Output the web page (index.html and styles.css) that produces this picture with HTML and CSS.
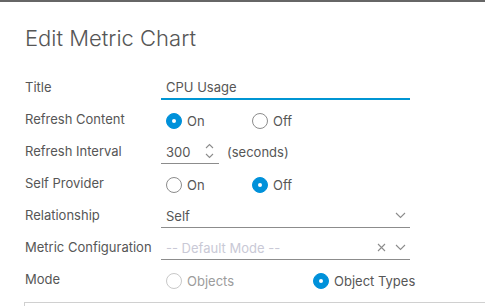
FILE: index.html
```html
<!DOCTYPE html>
<html>
<head>
<meta charset="utf-8">
<link rel="stylesheet" href="styles.css">
</head>
<body>
<div class="modal">
  <h1 class="heading">Edit Metric Chart</h1>
  <div class="form">
    <div class="row">
      <div class="label">Title</div>
      <div class="control">
        <div class="input input-active">CPU Usage</div>
      </div>
    </div>
    <div class="row">
      <div class="label">Refresh Content</div>
      <div class="control radios">
        <label class="radio radio-first"><span class="dot checked"></span>On</label>
        <label class="radio"><span class="dot"></span>Off</label>
      </div>
    </div>
    <div class="row">
      <div class="label">Refresh Interval</div>
      <div class="control">
        <div class="number">
          <span class="num-val">300</span>
          <svg class="spin" width="9" height="16" viewBox="0 0 9 16"><path d="M1 5 L4.5 1.5 L8 5" fill="none" stroke="#8c8c8c" stroke-width="1.1"/><path d="M1 11 L4.5 14.5 L8 11" fill="none" stroke="#8c8c8c" stroke-width="1.1"/></svg>
        </div>
        <span class="unit">(seconds)</span>
      </div>
    </div>
    <div class="row">
      <div class="label">Self Provider</div>
      <div class="control radios">
        <label class="radio radio-first"><span class="dot"></span>On</label>
        <label class="radio"><span class="dot checked"></span>Off</label>
      </div>
    </div>
    <div class="row">
      <div class="label">Relationship</div>
      <div class="control">
        <div class="select">
          <span class="sel-val">Self</span>
          <svg class="chev" width="11" height="7" viewBox="0 0 11 7"><path d="M1 1 L5.5 5.5 L10 1" fill="none" stroke="#8c8c8c" stroke-width="1.1"/></svg>
        </div>
      </div>
    </div>
    <div class="row">
      <div class="label">Metric Configuration</div>
      <div class="control">
        <div class="select">
          <span class="sel-val placeholder">-- Default Mode --</span>
          <svg class="clear" width="9" height="9" viewBox="0 0 9 9"><path d="M1 1 L8 8 M8 1 L1 8" fill="none" stroke="#8c8c8c" stroke-width="1.1"/></svg>
          <svg class="chev" width="11" height="7" viewBox="0 0 11 7"><path d="M1 1 L5.5 5.5 L10 1" fill="none" stroke="#8c8c8c" stroke-width="1.1"/></svg>
        </div>
      </div>
    </div>
    <div class="row">
      <div class="label">Mode</div>
      <div class="control radios">
        <label class="radio radio-wide disabled"><span class="dot"></span>Objects</label>
        <label class="radio radio-auto"><span class="dot checked"></span>Object Types</label>
      </div>
    </div>
  </div>
  <div class="panel"></div>
</div>
</body>
</html>
```

FILE: styles.css
```css
html, body {
  margin: 0;
  padding: 0;
  background: #fff;
}
body {
  font-family: "Inter", "Lato", sans-serif;
  color: #565656;
  overflow: hidden;
  height: 306px;
}
.modal {
  border-top: 2px solid #666;
  padding: 0 0 0 24px;
}
.heading {
  margin: 0;
  padding: 23px 0 0 1px;
  height: 46px;
  box-sizing: border-box;
  font-weight: 300;
  font-size: 22px;
  line-height: 26px;
  color: #565656;
}
.form {
  padding-top: 23px;
}
.row {
  display: flex;
  align-items: center;
  height: 32px;
}
.label {
  width: 136px;
  padding-left: 1px;
  font-size: 13px;
}
.control {
  display: flex;
  align-items: center;
  font-size: 13px;
}
.input {
  width: 244px;
  padding: 0 0 0 5px;
  height: 22px;
  line-height: 20px;
  border-bottom: 1px solid #b3b3b3;
}
.input-active {
  border-bottom: 2px solid #0095d3;
  height: 21px;
  margin-top: 3px;
}
.radio {
  display: flex;
  align-items: center;
  gap: 5px;
  width: 86px;
  padding-left: 5px;
  margin-top: 3px;
  white-space: nowrap;
}
.radio-first {
  width: 81px;
}
.radio-wide {
  width: 142px;
}
.radio-auto {
  width: auto;
}
.dot {
  width: 14px;
  height: 14px;
  border: 1px solid #8c8c8c;
  border-radius: 50%;
  box-sizing: content-box;
  display: inline-block;
  position: relative;
  flex: none;
}
.dot.checked {
  border: 1px solid #0091da;
  background: #0091da;
}
.dot.checked::after {
  content: "";
  position: absolute;
  left: 5px;
  top: 5px;
  width: 4px;
  height: 4px;
  border-radius: 50%;
  background: #fff;
}
.disabled {
  color: #9c9c9c;
}
.disabled .dot {
  border-color: #c8c8c8;
}
.number {
  display: flex;
  align-items: center;
  width: 53px;
  padding-left: 5px;
  height: 22px;
  border-bottom: 1px solid #8c8c8c;
  margin-top: 2px;
}
.num-val {
  width: 39px;
}
.spin {
  margin-top: -1px;
}
.unit {
  margin-left: 8px;
  margin-top: 2px;
}
.select {
  display: flex;
  align-items: center;
  width: 244px;
  padding-left: 5px;
  height: 22px;
  border-bottom: 1px solid #8c8c8c;
  margin-top: 2px;
}
.sel-val {
  flex: 1;
}
.placeholder {
  color: #c9c9d6;
}
.clear {
  margin-right: 9px;
}
.chev {
  margin-right: 4px;
}
.panel {
  margin-top: 7px;
  height: 3px;
  border-top: 1px solid #d0d0d0;
  border-left: 1px solid #d0d0d0;
}
```
